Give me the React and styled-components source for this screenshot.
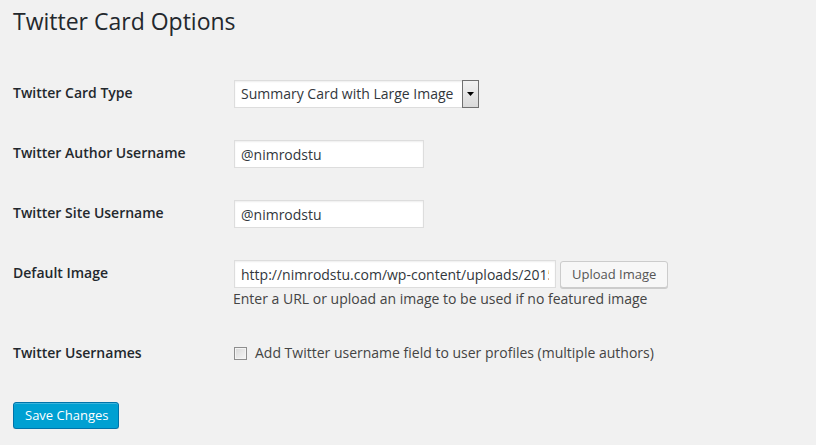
import React from "react";
import styled, { createGlobalStyle } from "styled-components";

const GlobalStyle = createGlobalStyle`
  html, body {
    margin: 0;
    padding: 0;
    background: #f1f1f1;
  }
  body {
    font-family: "Open Sans", "Liberation Sans", sans-serif;
    font-size: 14px;
    color: #444;
    line-height: 1.4em;
  }
`;

const Wrap = styled.div`
  padding: 0 13px;
`;

const Title = styled.h1`
  margin: 0;
  padding: 7px 0 0;
  font-size: 23px;
  font-weight: 400;
  line-height: 29px;
  color: #23282d;
`;

const FormTable = styled.table`
  border-collapse: collapse;
  margin-top: 28px;
`;

const Label = styled.th`
  width: 200px;
  padding: 20px 10px 20px 0;
  text-align: left;
  vertical-align: top;
  font-weight: 600;
  font-size: 14px;
  line-height: 1.3;
  color: #23282d;
`;

const Field = styled.td`
  padding: 15px 10px;
  vertical-align: middle;
  line-height: 1.3;
`;

const SelectBox = styled.div`
  display: flex;
  width: 243px;
  height: 26px;
  margin: 1px;
  border: 1px solid #ddd;
  background: #fff;
  box-shadow: inset 0 1px 2px rgba(0, 0, 0, 0.07);
  color: #32373c;
`;

const SelectText = styled.span`
  flex: 1;
  padding: 0 6px;
  line-height: 26px;
  white-space: nowrap;
`;

const ArrowBox = styled.span`
  display: flex;
  align-items: center;
  justify-content: center;
  width: 15px;
  margin: -1px -1px -1px 0;
  border: 1px solid #707070;
  background: linear-gradient(#f2f2f2, #dadada);
`;

const TextInput = styled.input`
  box-sizing: border-box;
  width: ${(p) => p.$width}px;
  height: 28px;
  margin: 1px;
  padding: 3px 6px;
  border: 1px solid #ddd;
  background: #fff;
  box-shadow: inset 0 1px 2px rgba(0, 0, 0, 0.07);
  font-family: inherit;
  font-size: 14px;
  color: #32373c;
  outline: none;
`;

const InlineRow = styled.div`
  display: flex;
  align-items: center;
  gap: 3px;
`;

const Button = styled.button`
  box-sizing: border-box;
  height: 27px;
  padding: 0 11px 1px;
  border: 1px solid #ccc;
  border-radius: 3px;
  background: #f7f7f7;
  box-shadow: 0 1px 0 #ccc;
  font-family: inherit;
  font-size: 13px;
  color: #555;
  white-space: nowrap;
  cursor: pointer;
`;

const PrimaryButton = styled(Button)`
  height: 27px;
  width: 106px;
  border-color: #0073aa;
  background: #00a0d2;
  box-shadow: inset 0 1px 0 rgba(120, 200, 230, 0.5), 0 1px 0 rgba(0, 0, 0, 0.15);
  color: #fff;
`;

const Description = styled.p`
  margin: 0;
  font-size: 14px;
  line-height: 20px;
  color: #444;
`;

const CheckLabel = styled.label`
  display: flex;
  align-items: center;
  gap: 8px;
  color: #444;
  font-size: 14px;
`;

const CheckBox = styled.span`
  box-sizing: border-box;
  width: 13px;
  height: 13px;
  margin: 1px 0 0 1px;
  border: 1px solid #8e8e8e;
  background: linear-gradient(135deg, #d8d8d8, #f6f6f6);
  box-shadow: inset 0 0 0 1px #f4f4f4;
`;

const Submit = styled.p`
  margin: 20px 0 0;
`;

function DropArrow() {
  return (
    <svg width="7" height="4" viewBox="0 0 7 4">
      <path d="M0 0h7L3.5 4z" fill="#000" />
    </svg>
  );
}

function Row({ label, children }) {
  return (
    <tr>
      <Label scope="row">{label}</Label>
      <Field>{children}</Field>
    </tr>
  );
}

export default function App() {
  return (
    <>
      <GlobalStyle />
      <Wrap>
        <Title>Twitter Card Options</Title>
        <FormTable>
          <tbody>
            <Row label="Twitter Card Type">
              <SelectBox>
                <SelectText>Summary Card with Large Image</SelectText>
                <ArrowBox>
                  <DropArrow />
                </ArrowBox>
              </SelectBox>
            </Row>
            <Row label="Twitter Author Username">
              <TextInput $width={190} defaultValue="@nimrodstu" />
            </Row>
            <Row label="Twitter Site Username">
              <TextInput $width={190} defaultValue="@nimrodstu" />
            </Row>
            <Row label="Default Image">
              <InlineRow>
                <TextInput
                  $width={322}
                  defaultValue="http://nimrodstu.com/wp-content/uploads/2015/05/twitter-card.png"
                />
                <Button>Upload Image</Button>
              </InlineRow>
              <Description>
                Enter a URL or upload an image to be used if no featured image
              </Description>
            </Row>
            <Row label="Twitter Usernames">
              <CheckLabel>
                <CheckBox />
                Add Twitter username field to user profiles (multiple authors)
              </CheckLabel>
            </Row>
          </tbody>
        </FormTable>
        <Submit>
          <PrimaryButton>Save Changes</PrimaryButton>
        </Submit>
      </Wrap>
    </>
  );
}
